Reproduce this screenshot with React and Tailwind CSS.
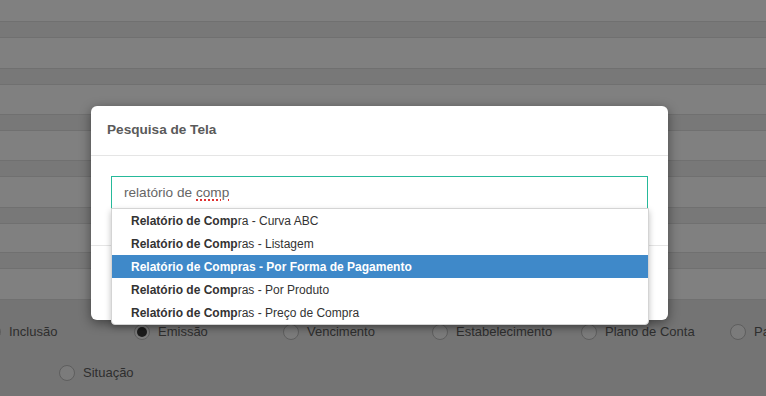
import React from "react";

const bands = [
  { h: "h-[22px]", dark: false },
  { h: "h-[16px]", dark: true },
  { h: "h-[31px]", dark: false },
  { h: "h-[16px]", dark: true },
  { h: "h-[30px]", dark: false },
  { h: "h-[16px]", dark: true },
  { h: "h-[30px]", dark: false },
  { h: "h-[16px]", dark: true },
  { h: "h-[31px]", dark: false },
  { h: "h-[16px]", dark: true },
  { h: "h-[29px]", dark: false },
  { h: "h-[16px]", dark: true },
  { h: "h-[31px]", dark: false },
];

const options = [
  { match: "Relatório de Comp", rest: "ra - Curva ABC" },
  { match: "Relatório de Comp", rest: "ras - Listagem" },
  { match: "Relatório de Comp", rest: "ras - Por Forma de Pagamento", active: true },
  { match: "Relatório de Comp", rest: "ras - Por Produto" },
  { match: "Relatório de Comp", rest: "ras - Preço de Compra" },
];

const filters = ["Inclusão", "Emissão", "Vencimento", "Estabelecimento", "Plano de Conta", "Pagamento"];

function Radio({ checked, label }) {
  return (
    <div className="flex items-center gap-2 w-[149px] shrink-0">
      <span className="w-4 h-4 rounded-full border border-[#5e5e5e] bg-[#7b7b7b] flex items-center justify-center shrink-0">
        {checked && <span className="w-[10px] h-[10px] rounded-full bg-[#1c1c1c]"></span>}
      </span>
      <span className="text-[13px] text-[#2e2e2e] whitespace-nowrap">{label}</span>
    </div>
  );
}

export default function App() {
  return (
    <div
      className="relative w-[766px] h-[396px] overflow-hidden bg-[#747474]"
      style={{ fontFamily: '"Liberation Sans", Arial, sans-serif' }}
    >
      {/* page behind the modal */}
      <div className="flex flex-col">
        {bands.map((b, i) => (
          <div
            key={i}
            className={
              b.h +
              " border-b border-[#707070] " +
              (b.dark ? "bg-[#787878]" : "bg-[#808080]")
            }
          ></div>
        ))}
      </div>
      <div className="flex items-center h-[62px] -ml-[15px] pt-[1px]">
        {filters.map((f) => (
          <Radio key={f} label={f} checked={f === "Emissão"} />
        ))}
      </div>
      <div className="flex items-center h-[22px] ml-[59px]">
        <Radio label="Situação" />
      </div>

      {/* modal */}
      <div className="absolute left-[91px] top-[106px] w-[577px] h-[214px] bg-white rounded-[6px] shadow-[0_3px_12px_rgba(0,0,0,0.45)] flex flex-col">
        <div className="h-[50px] border-b border-[#e5e5e5] flex items-center px-4">
          <span className="text-[13.6px] font-bold text-[#5a5a5a]">Pesquisa de Tela</span>
        </div>
        <div className="relative h-[90px] border-b border-[#e5e5e5] pt-5 px-5">
          <div className="h-[34px] border border-[#26b99a] flex items-center pl-3 text-[13.6px] text-[#666]">
            relatório de{" "}
            <span className="ml-[4px] underline decoration-dotted decoration-2 decoration-[#e03030] underline-offset-[3px]">comp</span>
          </div>
          <div className="absolute left-5 top-[52px] w-[538px] bg-white border border-[#d4d4d4] rounded-b-[4px] shadow-[0_3px_6px_rgba(0,0,0,0.25)] z-10">
            {options.map((o, i) => (
              <div
                key={i}
                className={
                  "h-[23px] flex items-center pl-[19px] text-[12px] whitespace-nowrap " +
                  (o.active ? "bg-[#3f89c9] text-white font-bold" : "text-[#333]")
                }
              >
                <span className="font-bold">{o.match}</span>
                <span>{o.rest}</span>
              </div>
            ))}
          </div>
        </div>
        <div className="flex-1"></div>
      </div>
    </div>
  );
}
